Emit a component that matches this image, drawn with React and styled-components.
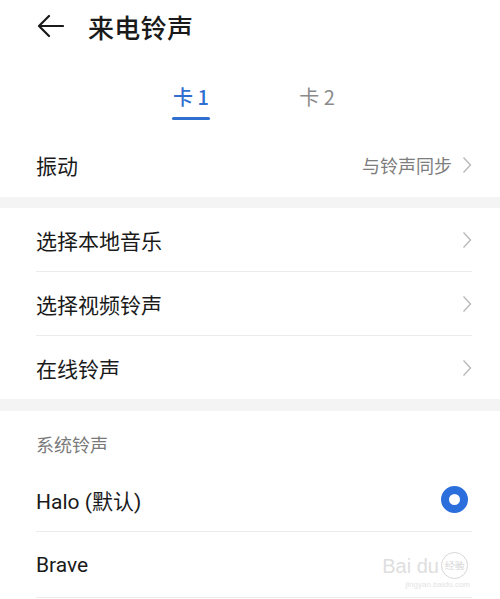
import styled, { createGlobalStyle } from 'styled-components';

const GlobalStyle = createGlobalStyle`
  body {
    margin: 0;
    background: #fff;
    font-family: "Noto Sans CJK SC", "Noto Sans", sans-serif;
    color: #1a1a1a;
  }
`;

const Page = styled.div`
  width: 500px;
  height: 599px;
  overflow: hidden;
  background: #fff;
`;

const Header = styled.div`
  display: flex;
  align-items: center;
  height: 52px;
  padding-left: 36px;
  gap: 24px;
`;

const Title = styled.h1`
  margin: 0;
  font-size: 26px;
  font-weight: 500;
  letter-spacing: 0.3px;
`;

const Tabs = styled.div`
  display: flex;
  justify-content: center;
  gap: 88px;
  height: 80px;
  padding-left: 8px;
  box-sizing: border-box;
  padding-top: 32px;
`;

const Tab = styled.div`
  display: flex;
  flex-direction: column;
  align-items: center;
  gap: 7px;
  font-size: 20px;
  color: ${(p) => (p.active ? '#2f6fd0' : '#8a8a8a')};
  font-weight: ${(p) => (p.active ? 500 : 400)};
  line-height: 26px;
  &::after {
    content: '';
    width: 38px;
    height: 3px;
    border-radius: 2px;
    background: ${(p) => (p.active ? '#2f6fd0' : 'transparent')};
  }
`;

const Band = styled.div`
  height: ${(p) => p.h}px;
  background: #f4f4f4;
`;

const Row = styled.div`
  display: flex;
  align-items: center;
  height: ${(p) => p.h || 63}px;
  margin: 0 28px 0 36px;
  border-bottom: ${(p) => (p.divider ? '1px solid #ebebeb' : 'none')};
  font-size: 21px;
`;

const Label = styled.span`
  flex: 1;
  font-family: ${(p) => (p.latin ? '"Roboto", "Noto Sans CJK SC", sans-serif' : 'inherit')};
`;

const Value = styled.span`
  font-size: 18px;
  color: #7d7d7d;
  margin-right: 10px;
`;

const SectionTitle = styled.div`
  height: 57px;
  box-sizing: border-box;
  padding: 20px 0 0 36px;
  font-size: 18px;
  color: #7a7a7a;
`;

const Radio = styled.span`
  display: flex;
  align-items: center;
  justify-content: center;
  width: 27px;
  height: 27px;
  box-sizing: border-box;
  border-radius: 50%;
  margin-right: 4px;
  border: ${(p) => (p.checked ? '8px solid #2b6fdc' : '1.5px solid #d6d6d6')};
  font-size: 10px;
  color: #d4d4d4;
`;

const Watermark = styled.div`
  display: flex;
  flex-direction: column;
  align-items: flex-end;
  margin-top: 14px;
  font-family: "Liberation Sans", sans-serif;
  color: #dedede;
`;

const WatermarkTop = styled.div`
  display: flex;
  align-items: center;
  gap: 2px;
  font-size: 20px;
  line-height: 1;
`;

const WatermarkUrl = styled.div`
  font-size: 8px;
  line-height: 12px;
  margin-right: 2px;
  color: #e4e4e4;
`;

function Chevron() {
  return (
    <svg width="10" height="18" viewBox="0 0 10 18">
      <path d="M1.5 1.5 L8.5 9 L1.5 16.5" fill="none" stroke="#b9b9b9" strokeWidth="1.4" />
    </svg>
  );
}

function BackArrow() {
  return (
    <svg width="28" height="24" viewBox="0 0 28 24">
      <path d="M13 2 L3 12 L13 22 M3 12 H27" fill="none" stroke="#1a1a1a" strokeWidth="2.2" strokeLinecap="round" strokeLinejoin="round" />
    </svg>
  );
}

const options = ['选择本地音乐', '选择视频铃声', '在线铃声'];

export default function App() {
  return (
    <Page>
      <GlobalStyle />
      <Header>
        <BackArrow />
        <Title>来电铃声</Title>
      </Header>
      <Tabs>
        <Tab active>卡 1</Tab>
        <Tab>卡 2</Tab>
      </Tabs>
      <Row h={65}>
        <Label>振动</Label>
        <Value>与铃声同步</Value>
        <Chevron />
      </Row>
      <Band h={11} />
      {options.map((o, i) => (
        <Row key={o} divider={i < options.length - 1}>
          <Label>{o}</Label>
          <Chevron />
        </Row>
      ))}
      <Band h={12} />
      <SectionTitle>系统铃声</SectionTitle>
      <Row divider>
        <Label latin>Halo (默认)</Label>
        <Radio checked />
      </Row>
      <Row divider h={65}>
        <Label latin>Brave</Label>
        <Watermark>
          <WatermarkTop>
            Bai du
            <Radio>经验</Radio>
          </WatermarkTop>
          <WatermarkUrl>jingyan.baidu.com</WatermarkUrl>
        </Watermark>
      </Row>
    </Page>
  );
}
